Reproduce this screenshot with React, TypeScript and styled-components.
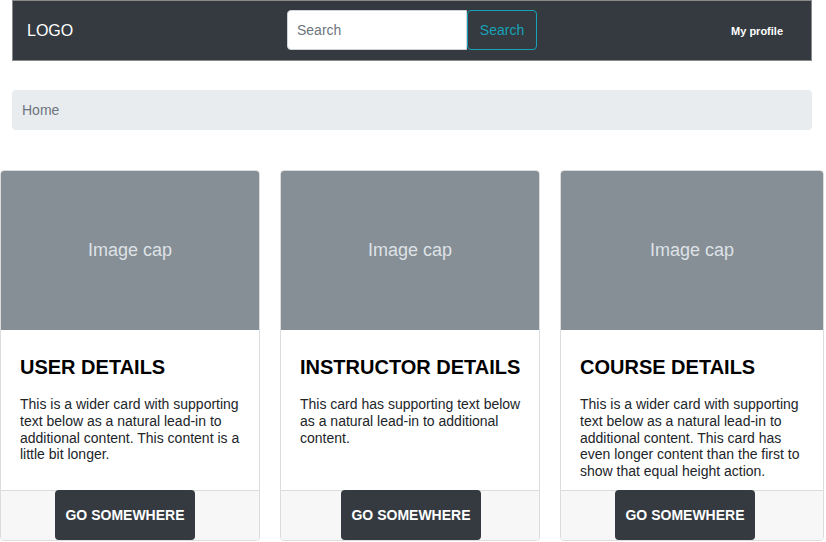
import styled, { createGlobalStyle } from "styled-components";

const GlobalStyle = createGlobalStyle`
  body {
    margin: 0;
    font-family: "Liberation Sans", Arial, sans-serif;
    background: #fff;
    color: #212529;
  }
  * { box-sizing: border-box; }
`;

const Page = styled.div`
  width: 826px;
  height: 542px;
  overflow: hidden;
`;

const Nav = styled.nav`
  width: 800px;
  height: 61px;
  margin-left: 12px;
  background: #343a40;
  border: 1px solid #8a8a8a;
  display: grid;
  grid-template-columns: 1fr auto 1fr;
  align-items: center;
  padding: 0 14px;
`;

const Logo = styled.div`
  color: #fff;
  font-size: 16px;
`;

const SearchForm = styled.form`
  display: flex;
  height: 40px;
  margin-top: -1px;
`;

const SearchInput = styled.input`
  width: 180px;
  height: 40px;
  border: 1px solid #ced4da;
  border-radius: 4px 0 0 4px;
  padding: 0 9px;
  font-family: inherit;
  font-size: 14px;
  color: #495057;
  outline: none;
  &::placeholder { color: #6c757d; }
`;

const SearchButton = styled.button`
  width: 70px;
  height: 40px;
  background: transparent;
  border: 1px solid #17a2b8;
  border-radius: 4px;
  color: #17a2b8;
  font-family: inherit;
  font-size: 14px;
  padding: 0;
`;

const Profile = styled.a`
  justify-self: end;
  color: #fff;
  font-size: 11px;
  font-weight: bold;
  padding-right: 14px;
`;

const Breadcrumb = styled.div`
  width: 800px;
  height: 40px;
  margin: 29px 0 0 12px;
  background: #e9ecef;
  border-radius: 4px;
  display: flex;
  align-items: center;
  padding: 0 10px;
  color: #6c757d;
  font-size: 14px;
`;

const CardRow = styled.div`
  display: grid;
  grid-template-columns: 260px 260px 264px;
  column-gap: 20px;
  margin-top: 40px;
`;

const Card = styled.div`
  height: 371px;
  border: 1px solid #dcdcdc;
  border-radius: 4px;
  display: flex;
  flex-direction: column;
  overflow: hidden;
`;

const ImageCap = styled.div`
  height: 159px;
  flex-shrink: 0;
  background: #868e96;
  color: #dee2e6;
  font-size: 18px;
  display: flex;
  align-items: center;
  justify-content: center;
`;

const Body = styled.div`
  flex: 1;
  padding: 25px 10px 0 19px;
`;

const Title = styled.h5`
  margin: 0 0 17px;
  font-size: 20px;
  font-weight: bold;
  line-height: 1.2;
  text-transform: uppercase;
  color: #000;
  white-space: nowrap;
`;

const Text = styled.p`
  margin: 0;
  font-size: 14px;
  line-height: 1.2;
  color: #212529;
  max-width: 224px;
`;

const Footer = styled.div<{ $offset: number }>`
  height: 50px;
  flex-shrink: 0;
  background: #f7f7f7;
  border-top: 1px solid #dcdcdc;
  padding-left: ${(p) => p.$offset}px;
`;

const GoButton = styled.a`
  display: flex;
  align-items: center;
  justify-content: center;
  width: 140px;
  height: 50px;
  margin-top: -1px;
  background: #343a40;
  border-radius: 4px;
  color: #fff;
  font-size: 14px;
  font-weight: bold;
`;

const cards = [
  {
    title: "User details",
    text: "This is a wider card with supporting text below as a natural lead-in to additional content. This content is a little bit longer.",
    offset: 54,
  },
  {
    title: "Instructor details",
    text: "This card has supporting text below as a natural lead-in to additional content.",
    offset: 60,
  },
  {
    title: "Course details",
    text: "This is a wider card with supporting text below as a natural lead-in to additional content. This card has even longer content than the first to show that equal height action.",
    offset: 54,
  },
];

export default function App() {
  return (
    <Page>
      <GlobalStyle />
      <Nav>
        <Logo>LOGO</Logo>
        <SearchForm onSubmit={(e) => e.preventDefault()}>
          <SearchInput placeholder="Search" />
          <SearchButton type="submit">Search</SearchButton>
        </SearchForm>
        <Profile>My profile</Profile>
      </Nav>
      <Breadcrumb>Home</Breadcrumb>
      <CardRow>
        {cards.map((c) => (
          <Card key={c.title}>
            <ImageCap>Image cap</ImageCap>
            <Body>
              <Title>{c.title}</Title>
              <Text>{c.text}</Text>
            </Body>
            <Footer $offset={c.offset}>
              <GoButton>GO SOMEWHERE</GoButton>
            </Footer>
          </Card>
        ))}
      </CardRow>
    </Page>
  );
}
